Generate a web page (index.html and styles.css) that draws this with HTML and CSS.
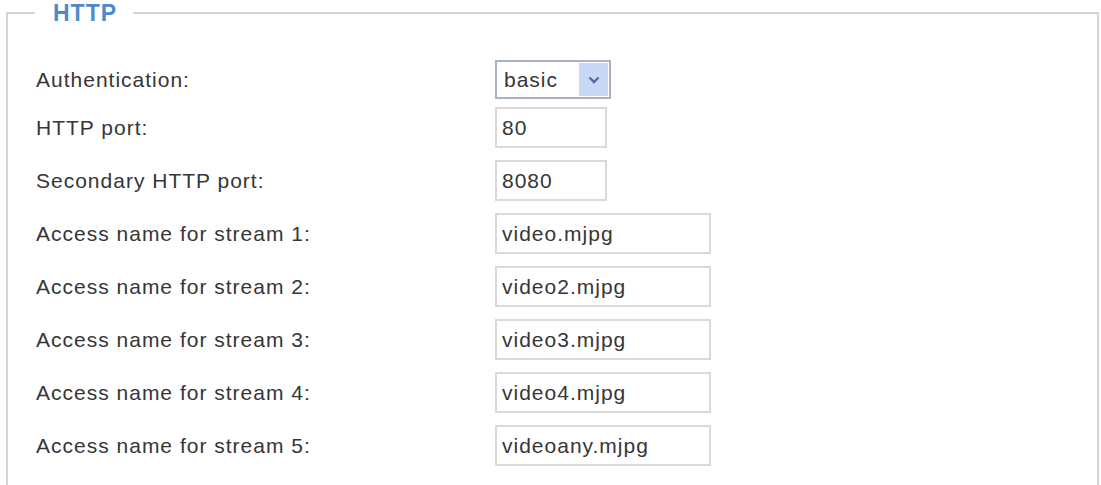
FILE: index.html
```html
<!DOCTYPE html>
<html lang="en">
<head>
  <meta charset="UTF-8" />
  <title>HTTP</title>
  <link rel="stylesheet" href="styles.css">
</head>
<body>

  <form class="settings">
    <fieldset class="group">
      <legend>HTTP</legend>

      <div class="row first">
        <label for="auth">Authentication:</label>
        <div class="select">
          <span class="select-value">basic</span>
          <span class="select-btn">
            <svg width="12" height="8" viewBox="0 0 12 8"><path d="M1.5 1.5 L6 6 L10.5 1.5" fill="none" stroke="#4d6fa8" stroke-width="2.4"/></svg>
          </span>
        </div>
      </div>

      <div class="row">
        <label for="port">HTTP port:</label>
        <input type="text" id="port" class="short" value="80" />
      </div>

      <div class="row">
        <label for="port2">Secondary HTTP port:</label>
        <input type="text" id="port2" class="short" value="8080" />
      </div>

      <div class="row">
        <label for="s1">Access name for stream 1:</label>
        <input type="text" id="s1" value="video.mjpg" />
      </div>

      <div class="row">
        <label for="s2">Access name for stream 2:</label>
        <input type="text" id="s2" value="video2.mjpg" />
      </div>

      <div class="row">
        <label for="s3">Access name for stream 3:</label>
        <input type="text" id="s3" value="video3.mjpg" />
      </div>

      <div class="row">
        <label for="s4">Access name for stream 4:</label>
        <input type="text" id="s4" value="video4.mjpg" />
      </div>

      <div class="row">
        <label for="s5">Access name for stream 5:</label>
        <input type="text" id="s5" value="videoany.mjpg" />
      </div>
    </fieldset>
  </form>

</body>
</html>
```

FILE: styles.css
```css
body {
  margin: 0;
  background: #fff;
  font-family: "Liberation Sans", Arial, sans-serif;
  color: #363636;
  overflow: hidden;
}
.group {
  margin: 0 2px 0 6px;
  padding: 34px 0 40px 0;
  border: 2px solid #d6d6d6;
}
.group legend {
  margin-left: 27px;
  padding: 0 16px 0 18px;
  font-size: 23px;
  line-height: 26px;
  font-weight: bold;
  letter-spacing: 1px;
  color: #4f8bc9;
}
.row {
  display: flex;
  align-items: center;
  padding-left: 28px;
  margin-bottom: 12px;
}
.row.first {
  margin-bottom: 8px;
}
.row label {
  width: 459px;
  font-size: 21px;
  letter-spacing: 1px;
}
input {
  box-sizing: border-box;
  width: 216px;
  height: 41px;
  padding: 0 5px;
  border: 2px solid #d9d9d9;
  font-family: "Liberation Sans", Arial, sans-serif;
  font-size: 21px;
  letter-spacing: 1px;
  color: #363636;
  background: #fff;
  outline: none;
}
input.short {
  width: 112px;
}
.select {
  box-sizing: border-box;
  display: flex;
  align-items: stretch;
  width: 116px;
  height: 39px;
  padding: 1px;
  border: 2px solid #a9b4c2;
  background: #fff;
}
.select-value {
  flex: 1;
  display: flex;
  align-items: center;
  padding-left: 6px;
  font-size: 21px;
  letter-spacing: 1px;
}
.select-btn {
  width: 29px;
  display: flex;
  align-items: center;
  justify-content: center;
  background: #c9d8f4;
}
```
